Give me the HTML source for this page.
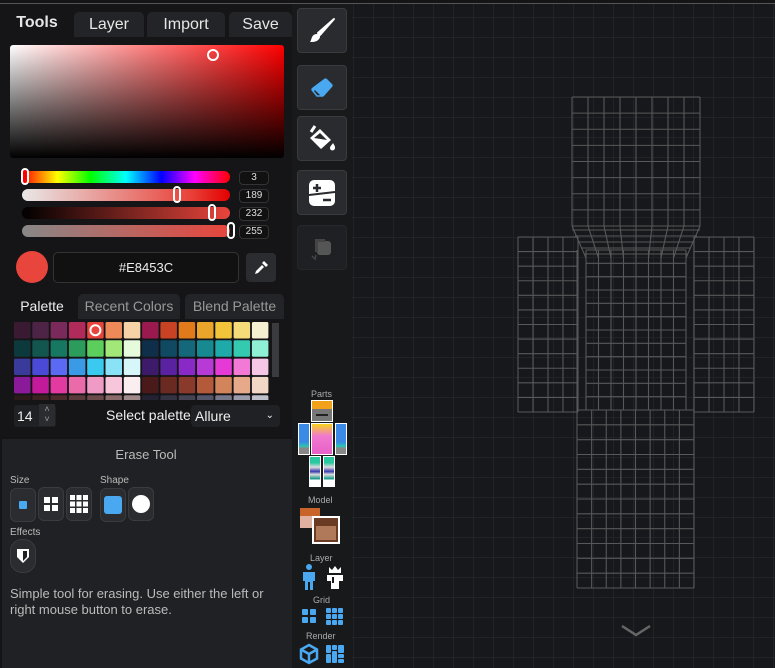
<!DOCTYPE html>
<html><head><meta charset="utf-8"><style>
*{box-sizing:border-box;margin:0;padding:0}
body{width:775px;height:668px;overflow:hidden;background:#141416;font-family:"Liberation Sans",sans-serif;color:#ddd;position:relative}
.a{position:absolute}
.tab{position:absolute;top:12px;height:25px;background:#232427;border-radius:5px 5px 0 0;color:#e6e6e6;font-size:16px;text-align:center;line-height:25px}
.tb{position:absolute;left:297px;width:50px;height:45px;background:#2a2b2e;border:1px solid #3a3b3f;border-radius:4px;display:flex;align-items:center;justify-content:center}
.num{position:absolute;left:239px;width:30px;height:14px;background:#111;border:1px solid #333;border-radius:4px;font-size:10px;color:#ddd;text-align:center;line-height:12px}
.sl{position:absolute;left:22px;width:208px;height:12px;border-radius:6px}
.th{position:absolute;width:8px;height:17px;border:2px solid #fff;border-radius:4px;top:-3px}
.pt{position:absolute;top:294px;height:25px;background:#232427;border-radius:5px 5px 0 0;color:#999;font-size:14px;text-align:center;line-height:25px}
.btn{position:absolute;width:26px;height:34px;background:#2b2c30;border:1px solid #3a3b3f;border-radius:6px;display:flex;align-items:center;justify-content:center}
.lbl{position:absolute;font-size:10px;color:#bbb}
</style></head><body>
<div class="a" style="left:0;top:3px;width:775px;height:1px;background:#555"></div>
<div class="a" style="left:0;top:4px;width:292px;height:432px;background:#151517"></div>
<div class="tab" style="left:4px;top:9px;width:66px;height:30px;background:#151517;font-weight:bold;line-height:27px">Tools</div>
<div class="tab" style="left:74px;width:70px">Layer</div>
<div class="tab" style="left:147px;width:78px">Import</div>
<div class="tab" style="left:229px;width:63px">Save</div>
<div class="a" style="left:10px;top:45px;width:274px;height:113px;border-radius:3px;background:linear-gradient(to bottom,rgba(0,0,0,0),#000),linear-gradient(to right,#fff,#f00)"></div>
<div class="a" style="left:207px;top:49px;width:12px;height:12px;border:2px solid #fff;border-radius:50%"></div>
<div class="sl" style="top:171px;background:linear-gradient(to right,#f00,#ff0 17%,#0f0 33%,#0ff 50%,#00f 67%,#f0f 83%,#f00)"><div class="th" style="left:-1px;background:#f00"></div></div>
<div class="sl" style="top:189px;background:linear-gradient(to right,#e8e8e8,#e8453c 80%,#e30000)"><div class="th" style="left:151px"></div></div>
<div class="sl" style="top:207px;background:linear-gradient(to right,#000,#e8453c)"><div class="th" style="left:186px"></div></div>
<div class="sl" style="top:225px;background:linear-gradient(to right,#888,#e8453c);"><div class="th" style="left:205px"></div></div>
<div class="num" style="top:171px">3</div>
<div class="num" style="top:189px">189</div>
<div class="num" style="top:207px">232</div>
<div class="num" style="top:225px">255</div>
<div class="a" style="left:16px;top:251px;width:32px;height:32px;border-radius:50%;background:#e8453c"></div>
<div class="a" style="left:53px;top:252px;width:186px;height:31px;background:#111;border:1px solid #333;border-radius:5px;font-size:13px;color:#eee;text-align:center;line-height:29px">#E8453C</div>
<div class="a" style="left:246px;top:253px;width:30px;height:29px;background:#2b2c30;border-radius:4px;display:flex;align-items:center;justify-content:center"><svg width="16" height="16" viewBox="0 0 16 16"><path d="M2 14l1-3 6-6 2 2-6 6z M9 3l2-2 4 4-2 2z" fill="#fff"/></svg></div>
<div class="pt" style="left:11px;width:62px;background:#151517;color:#eee">Palette</div>
<div class="pt" style="left:78px;width:102px">Recent Colors</div>
<div class="pt" style="left:185px;width:99px">Blend Palette</div>
<div class="a" style="left:10px;top:319px;width:274px;height:116px;background:#151517"></div>
<svg class="a" style="left:14px;top:322px" width="256" height="78" id="pal"></svg>
<div class="a" style="left:272px;top:323px;width:7px;height:54px;background:#3a3b3e"></div>
<div class="a" style="left:14px;top:405px;width:42px;height:22px;background:#202124;border-radius:3px;font-size:14px;color:#eee;line-height:22px;padding-left:3px">14<span style="position:absolute;left:25px;top:-1px;width:16px;height:22px;background:#2b2c30;color:#999;font-size:9px;text-align:center;line-height:10px">˄<br>˅</span></div>
<div class="a" style="left:106px;top:407px;font-size:14px;color:#eee">Select palette</div>
<div class="a" style="left:191px;top:405px;width:89px;height:22px;background:#202124;border-radius:4px;font-size:14px;color:#eee;line-height:22px;padding-left:4px">Allure<span style="position:absolute;right:6px;font-size:10px">&#8964;</span></div>
<div class="a" style="left:2px;top:439px;width:290px;height:229px;background:#202124"></div>
<div class="a" style="left:0;top:447px;width:292px;text-align:center;font-size:13px;color:#bbb">Erase Tool</div>
<div class="lbl" style="left:10px;top:475px">Size</div>
<div class="lbl" style="left:100px;top:475px">Shape</div>
<div class="btn" style="left:10px;top:488px;height:34px"><div style="width:8px;height:8px;background:#4aa8f0;border-radius:1px"></div></div>
<div class="btn" style="left:38px;top:487px"><svg width="14" height="14"><rect x="0" y="0" width="6" height="6" fill="#fff"/><rect x="8" y="0" width="6" height="6" fill="#fff"/><rect x="0" y="8" width="6" height="6" fill="#fff"/><rect x="8" y="8" width="6" height="6" fill="#fff"/></svg></div>
<div class="btn" style="left:66px;top:487px"><svg width="18" height="18"><g fill="#fff"><rect x="0" y="0" width="5" height="5"/><rect x="6.5" y="0" width="5" height="5"/><rect x="13" y="0" width="5" height="5"/><rect x="0" y="6.5" width="5" height="5"/><rect x="6.5" y="6.5" width="5" height="5"/><rect x="13" y="6.5" width="5" height="5"/><rect x="0" y="13" width="5" height="5"/><rect x="6.5" y="13" width="5" height="5"/><rect x="13" y="13" width="5" height="5"/></g></svg></div>
<div class="btn" style="left:100px;top:488px"><div style="width:18px;height:18px;background:#4aa8f0;border-radius:3px"></div></div>
<div class="btn" style="left:128px;top:487px"><div style="width:18px;height:18px;background:#fff;border-radius:50%"></div></div>
<div class="lbl" style="left:10px;top:527px">Effects</div>
<div class="btn" style="left:10px;top:539px;border-radius:12px"><svg width="12" height="14" viewBox="0 0 12 14"><path d="M0 0h12v8l-6 6-6-6z" fill="#fff"/><path d="M6 2h4v6l-4 4z" fill="#202124"/></svg></div>
<div class="a" style="left:10px;top:586px;font-size:13px;line-height:16px;color:#bbb;width:262px">Simple tool for erasing. Use either the left or right mouse button to erase.</div>
<div class="a" style="left:292px;top:4px;width:60px;height:664px;background:#18191b"></div>
<div class="tb" style="top:8px"><svg width="28" height="28" viewBox="0 0 28 28"><path d="M26 2L12 18l-2-2z" fill="#fff" stroke="#fff" stroke-width="2" stroke-linejoin="round"/><path d="M9 17c3 0 4 3 2 5-2 3-6 3-9 3 2-2 1-8 7-8z" fill="#fff"/></svg></div>
<div class="tb" style="top:65px"><svg width="26" height="22" viewBox="0 0 26 22"><path d="M15 2a2 2 0 0 1 3 0l5 5a2 2 0 0 1 0 3l-8 9H8l-5-5a2 2 0 0 1 0-3z" fill="#4aa8f0"/><path d="M5.5 12.5l7 6.5H8.5l-4-4z" fill="#2a2b2e"/><path d="M4 14l2-2 7 7H8z" fill="none" stroke="#4aa8f0" stroke-width="1.5"/></svg></div>
<div class="tb" style="top:116px"><svg width="30" height="30" viewBox="0 0 30 30"><path d="M4 8l4-6" stroke="#fff" stroke-width="3"/><path d="M3 14l10-9 11 11-10 9z" fill="#fff"/><path d="M7 14l6-5 7 7z" fill="#2a2b2e"/><path d="M26 19c2 3 3 5 1 7-2 1-4 0-4-2 0-2 2-3 3-5z" fill="#fff"/></svg></div>
<div class="tb" style="top:170px"><svg width="28" height="28" viewBox="0 0 28 28"><rect x="1" y="1" width="26" height="26" rx="5" fill="#fff"/><path d="M5 9h8M9 5v8" stroke="#2a2b2e" stroke-width="2.5"/><path d="M15 21h8" stroke="#2a2b2e" stroke-width="2.5"/><path d="M1 16L27 13" stroke="#2a2b2e" stroke-width="2"/></svg></div>
<div class="tb" style="top:225px;background:#1f2023;border-color:#26272a"><svg width="26" height="26" viewBox="0 0 26 26"><rect x="8" y="6" width="14" height="14" rx="3" fill="#555"/><path d="M6 4h10v3H9v10H6z" fill="#444"/><path d="M3 21l3 3 1-4" stroke="#444" stroke-width="1.5" fill="none"/></svg></div>
<div class="lbl" style="left:311px;top:389px;font-size:9px;color:#aaa">Parts</div>
<div class="a" style="left:311px;top:400px;width:22px;height:22px;background:#777;border:1px solid #fff"><div style="height:8px;background:#f2a21a"></div><div style="margin:3px 4px;height:4px;border-bottom:2px solid #222"></div></div>
<div class="a" style="left:311px;top:423px;width:22px;height:32px;background:linear-gradient(#f7d21a,#f07ad0 40%,#e860c8);border:1px solid #fff"></div>
<div class="a" style="left:298px;top:423px;width:12px;height:32px;background:linear-gradient(#3a8ae6 60%,#2ac8b0 75%,#888 80%);border:1px solid #fff"></div>
<div class="a" style="left:335px;top:423px;width:12px;height:32px;background:linear-gradient(#3a8ae6 60%,#2ac8b0 75%,#888 80%);border:1px solid #fff"></div>
<div class="a" style="left:309px;top:456px;width:12px;height:31px;background:linear-gradient(#2ac8a0 20%,#ddd 35%,#3a3ab0 50%,#ddd 60%,#1a9a8a 75%,#fff 80%);border:1px solid #fff"></div>
<div class="a" style="left:323px;top:456px;width:12px;height:31px;background:linear-gradient(#2ac8a0 20%,#ddd 35%,#3a3ab0 50%,#ddd 60%,#1a9a8a 75%,#fff 80%);border:1px solid #fff"></div>
<div class="lbl" style="left:308px;top:495px;font-size:9px;color:#aaa">Model</div>
<div class="a" style="left:300px;top:508px;width:20px;height:20px;background:linear-gradient(#c8642a 40%,#e0b0a0 40%)"></div>
<div class="a" style="left:312px;top:516px;width:28px;height:28px;background:#6a3a22;border:2px solid #fff"><div style="margin:8px 2px 0;height:14px;background:#b07a5a"></div></div>
<div class="lbl" style="left:310px;top:553px;font-size:9px;color:#aaa">Layer</div>
<svg class="a" style="left:301px;top:564px" width="16" height="26" viewBox="0 0 16 26"><circle cx="8" cy="3" r="3" fill="#4aa8f0"/><path d="M2 8h12v9h-2v9H9v-8H7v8H4v-9H2z" fill="#4aa8f0"/></svg>
<svg class="a" style="left:325px;top:565px" width="20" height="25" viewBox="0 0 20 25"><path d="M4 2l3 3 3-4 3 4 3-3v6H4z" fill="#fff"/><path d="M2 10h16v6h-4v8H6v-8H2z" fill="#fff"/><path d="M8 12v6" stroke="#18191b" stroke-width="2"/></svg>
<div class="lbl" style="left:313px;top:595px;font-size:9px;color:#aaa">Grid</div>
<svg class="a" style="left:302px;top:609px" width="14" height="14"><g fill="#4aa8f0"><rect width="6" height="6" rx="1"/><rect x="8" width="6" height="6" rx="1"/><rect y="8" width="6" height="6" rx="1"/><rect x="8" y="8" width="6" height="6" rx="1"/></g></svg>
<svg class="a" style="left:326px;top:608px" width="17" height="17"><g fill="#4aa8f0"><rect width="5" height="5" rx="1"/><rect x="6" width="5" height="5" rx="1"/><rect x="12" width="5" height="5" rx="1"/><rect y="6" width="5" height="5" rx="1"/><rect x="6" y="6" width="5" height="5" rx="1"/><rect x="12" y="6" width="5" height="5" rx="1"/><rect y="12" width="5" height="5" rx="1"/><rect x="6" y="12" width="5" height="5" rx="1"/><rect x="12" y="12" width="5" height="5" rx="1"/></g></svg>
<div class="lbl" style="left:306px;top:631px;font-size:9px;color:#aaa">Render</div>
<svg class="a" style="left:299px;top:643px" width="20" height="22" viewBox="0 0 20 22"><path d="M10 2l8 4.5v9L10 20l-8-4.5v-9z M10 11l8-4.5 M10 11L2 6.5 M10 11v9" fill="none" stroke="#4aa8f0" stroke-width="2.5"/></svg>
<svg class="a" style="left:326px;top:645px" width="18" height="18"><g fill="#4aa8f0"><rect width="5" height="8" rx="1"/><rect x="6" width="5" height="5" rx="1"/><rect x="12" width="6" height="8" rx="1"/><rect y="9" width="5" height="9" rx="1"/><rect x="6" y="6" width="5" height="12" rx="1"/><rect x="12" y="9" width="6" height="4" rx="1"/><rect x="12" y="14" width="6" height="4" rx="1"/></g></svg>
<div class="a" style="left:352px;top:4px;width:423px;height:664px;background-color:#17181b;background-image:linear-gradient(to right,#222326 1px,transparent 1px),linear-gradient(to bottom,#222326 1px,transparent 1px);background-size:20px 20px;background-position:1px 13px"></div>
<svg class="a" style="left:0;top:0" width="775" height="668" id="model"></svg>
<svg class="a" style="left:620px;top:624px" width="32" height="14"><path d="M2 2l14 9 14-9" stroke="#666" stroke-width="2.5" fill="none"/></svg>
<script>
var rows=[["#3a1a33","#4d2346","#7a2a5a","#b02a5a","#e8453c","#ee8a57","#f7d2a6","#9a1a4f","#c94224","#e07a1a","#eaa52a","#f2c43a","#f6dc78","#f5f0d0"],
["#0c3a3c","#12564f","#167860","#2c9c5c","#5cce5c","#a2e878","#e6fadc","#0e2e4a","#0f4a62","#15677a","#168a90","#1eaaa8","#34cab0","#8ef0d4"],
["#3a3a9a","#4a4ad6","#5a6af2","#3a9ae6","#3acaf0","#8ae2f6","#d6f6fa","#3e1a6a","#5a22a0","#8a2ac6","#b83ad6","#e63ad6","#f27ad6","#f6c6e6"],
["#8a1a9a","#c21a9a","#e23aa0","#ea6aaa","#f09ac6","#f8c6da","#fbeef0","#4a1a1a","#6a2a22","#8a3a2a","#b45a3a","#d2845a","#e6aa8a","#f2d6c6"],
["#2a1a1a","#3a2222","#4a2a2a","#5a3a3a","#6a4a4a","#8a6a6a","#a08a8a","#222233","#333344","#444455","#55556a","#77778a","#9a9aaa","#c0c0cc"]];
var s="";rows.forEach(function(r,i){r.forEach(function(c,j){s+='<rect x="'+(j*18.3)+'" y="'+(i*18.3)+'" width="16.5" height="16.5" rx="1.5" fill="'+c+'"/>';});});
s+='<circle cx="'+(4*18.3+8.2)+'" cy="8.2" r="5" fill="none" stroke="#fff" stroke-width="2"/>';
document.getElementById("pal").innerHTML=s;
function grid(x,y,w,h,cx,cy){var o='';for(var i=0;i<=cx;i++){var X=x+w*i/cx;o+='<line x1="'+X+'" y1="'+y+'" x2="'+X+'" y2="'+(y+h)+'"/>';}for(var j=0;j<=cy;j++){var Y=y+h*j/cy;o+='<line x1="'+x+'" y1="'+Y+'" x2="'+(x+w)+'" y2="'+Y+'"/>';}return o;}
var m='<g stroke="#58585a" stroke-width="1.1" fill="none">';
m+=grid(572,97,128,129,8,8);
m+=grid(518,237,60,175,4,12);
m+=grid(694,237,60,175,4,12);
m+=grid(577,410,117,178,8,12);
m+=grid(586,250,100,160,8,12);
for(var k=0;k<=8;k++){var xa=572+128*k/8,xb=586+100*k/8;m+='<line x1="'+xa+'" y1="226" x2="'+xb+'" y2="258"/>';}
for(var k=0;k<5;k++){m+='<line x1="'+(572+k*3)+'" y1="'+(230+k*6)+'" x2="'+(700-k*3)+'" y2="'+(230+k*6)+'"/>';}
m+='<line x1="577" y1="250" x2="577" y2="410"/><line x1="694" y1="250" x2="694" y2="410"/>';
m+='</g>';
document.getElementById("model").innerHTML=m;
</script>
</body></html>
